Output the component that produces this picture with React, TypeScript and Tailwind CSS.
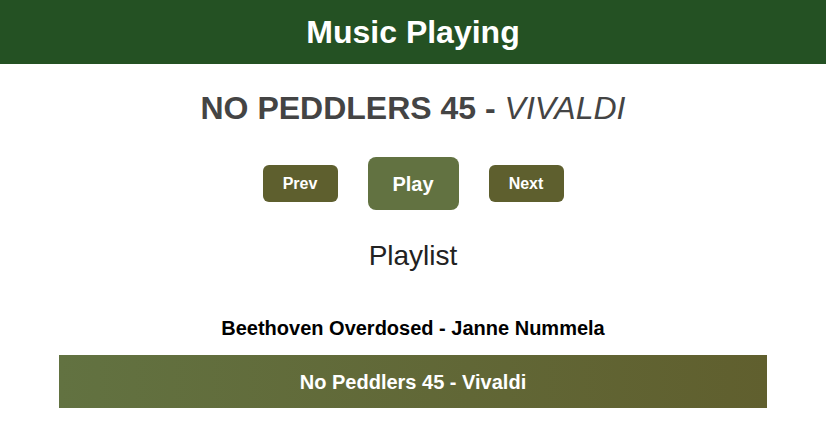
const songs = [
  { title: "Beethoven Overdosed", artist: "Janne Nummela" },
  { title: "No Peddlers 45", artist: "Vivaldi" },
];

const App = () => {
  const current = 1;
  return (
    <div className="min-h-screen bg-white font-['Liberation_Sans',Arial,sans-serif]">
      <header className="h-16 bg-[#245123] flex items-center justify-center">
        <h1 className="text-[32px] font-bold text-white">Music Playing</h1>
      </header>

      <h2 className="mt-6 text-center text-[32px] leading-10 font-bold text-[#444444] uppercase">
        No Peddlers 45 - <span className="italic font-normal">Vivaldi</span>
      </h2>

      <div className="mt-[29px] flex items-center justify-center gap-[30px]">
        <button className="w-[75px] h-[37px] rounded-md bg-[#5e5f2e] text-white font-bold text-base">
          Prev
        </button>
        <button className="w-[91px] h-[53px] rounded-lg bg-[#627241] text-white font-bold text-xl">
          Play
        </button>
        <button className="w-[75px] h-[37px] rounded-md bg-[#5e5f2e] text-white font-bold text-base">
          Next
        </button>
      </div>

      <h3 className="mt-[30px] text-center text-[28px] leading-8 text-[#222222]">Playlist</h3>

      <ul className="mt-[29px] mx-auto w-[708px] flex flex-col gap-px">
        {songs.map((s, i) => (
          <li
            key={i}
            className={
              i === current
                ? "h-[53px] flex items-center justify-center text-xl font-bold text-white bg-gradient-to-r from-[#627241] to-[#605f2e]"
                : "h-[53px] flex items-center justify-center text-xl font-bold text-black"
            }
          >
            {s.title} - {s.artist}
          </li>
        ))}
      </ul>
    </div>
  );
};

export default App;
